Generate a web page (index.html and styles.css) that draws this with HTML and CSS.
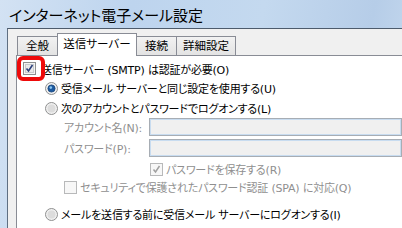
FILE: index.html
```html
<!DOCTYPE html>
<html lang="ja">
<head>
<meta charset="UTF-8">
<title>インターネット電子メール設定</title>
<link rel="stylesheet" href="styles.css">
</head>
<body>
<div class="window">
  <div class="titlebar">インターネット電子メール設定</div>
  <div class="client">
    <div class="tabs">
      <div class="tab">全般</div>
      <div class="tab active">送信サーバー</div>
      <div class="tab">接続</div>
      <div class="tab last">詳細設定</div>
    </div>
    <div class="panel">
      <div class="row row-smtp">
        <svg class="box" width="13" height="13" viewBox="0 0 13 13">
          <rect x="0.5" y="0.5" width="12" height="12" fill="#f4f4f4" stroke="#8e8f8f"/>
          <rect x="2.5" y="2.5" width="8" height="8" fill="#e9e9ea" stroke="#c9cbcd"/>
          <path d="M3.5 6.5 L5.5 9 L9.5 3" fill="none" stroke="#2b3f7a" stroke-width="1.6"/>
        </svg>
        <span class="label">送信サーバー (SMTP) は認証が必要(O)</span>
        <div class="mark"></div>
      </div>
      <div class="row row-radio">
        <svg class="radio" width="13" height="13" viewBox="0 0 13 13">
          <circle cx="6.5" cy="6.5" r="6" fill="#f0f0f0" stroke="#8e8f8f"/>
          <circle cx="6.5" cy="6.5" r="3.6" fill="#1d5aa0" stroke="#19457a" stroke-width="0.8"/>
          <circle cx="5.8" cy="5.6" r="1.3" fill="#8cc8f2"/>
        </svg>
        <span class="label">受信メール サーバーと同じ設定を使用する(U)</span>
      </div>
      <div class="row row-radio">
        <svg class="radio" width="13" height="13" viewBox="0 0 13 13">
          <circle cx="6.5" cy="6.5" r="6" fill="#f0f0f0" stroke="#8e8f8f"/>
          <circle cx="6.5" cy="6.5" r="4" fill="#dcdcdc"/>
        </svg>
        <span class="label">次のアカウントとパスワードでログオンする(L)</span>
      </div>
      <div class="field">
        <span class="field-label">アカウント名(N):</span>
        <div class="input"></div>
      </div>
      <div class="field">
        <span class="field-label">パスワード(P):</span>
        <div class="input"></div>
      </div>
      <div class="row row-save">
        <svg class="box" width="13" height="13" viewBox="0 0 13 13">
          <rect x="0.5" y="0.5" width="12" height="12" fill="#f7f7f7" stroke="#b8b9ba"/>
          <path d="M3.5 6.5 L5.5 9 L9.5 3" fill="none" stroke="#a0a0a0" stroke-width="1.5"/>
        </svg>
        <span class="label disabled">パスワードを保存する(R)</span>
      </div>
      <div class="row row-spa">
        <svg class="box" width="13" height="13" viewBox="0 0 13 13">
          <rect x="0.5" y="0.5" width="12" height="12" fill="#f7f7f7" stroke="#b8b9ba"/>
        </svg>
        <span class="label disabled">セキュリティで保護されたパスワード認証 (SPA) に対応(Q)</span>
      </div>
      <div class="row row-radio row-last">
        <svg class="radio" width="13" height="13" viewBox="0 0 13 13">
          <circle cx="6.5" cy="6.5" r="6" fill="#f0f0f0" stroke="#8e8f8f"/>
          <circle cx="6.5" cy="6.5" r="4" fill="#dcdcdc"/>
        </svg>
        <span class="label">メールを送信する前に受信メール サーバーにログオンする(I)</span>
      </div>
    </div>
  </div>
</div>
</body>
</html>
```

FILE: styles.css
```css
body {
  margin: 0;
  width: 402px;
  height: 228px;
  overflow: hidden;
  font-family: "DejaVu Sans", "Noto Sans CJK JP", sans-serif;
  font-feature-settings: "palt";
  background: linear-gradient(100deg, #d3e2f3 0%, #bdd4ee 30%, #c4d9ef 60%, #b6cde8 85%, #c8dbef 100%);
}
.window {
  display: flex;
  flex-direction: column;
  height: 228px;
}
.titlebar {
  height: 28px;
  line-height: 29px;
  padding-left: 9px;
  font-family: "Noto Sans CJK JP", sans-serif;
  font-size: 15px;
  color: #000;
}
.client {
  flex: 1;
  margin-left: 7px;
  border-top: 1px solid #4d5b6c;
  border-left: 1px solid #5f6f82;
  background: #f0f0f0;
  padding: 4px 0 0 8px;
}
.tabs {
  display: flex;
  align-items: flex-end;
  height: 22px;
  padding-left: 1px;
  position: relative;
  z-index: 1;
}
.tab {
  box-sizing: border-box;
  height: 19px;
  border: 1px solid #898c95;
  border-bottom: none;
  margin-right: -1px;
  background: linear-gradient(#f2f2f2, #e3e3e3);
  font-size: 11.5px;
  line-height: 18px;
  text-align: center;
  width: 41px;
}
.tab.active {
  height: 23px;
  margin-bottom: -1px;
  width: 80px;
  background: #fff;
  line-height: 20px;
}
.tab.last {
  width: 60px;
}
.panel {
  background: #fff;
  border-top: 1px solid #898c95;
  border-left: 1px solid #898c95;
  height: 180px;
  padding-top: 3px;
  font-size: 11px;
  letter-spacing: -0.2px;
}
.row {
  display: flex;
  align-items: center;
  height: 19px;
  white-space: nowrap;
}
.row svg {
  flex: none;
}
.row-smtp {
  position: relative;
  padding-left: 6px;
}
.row-smtp .label {
  margin-left: 5px;
}
.mark {
  position: absolute;
  left: 0;
  top: -3px;
  width: 28px;
  height: 25px;
  box-sizing: border-box;
  border: 4px solid #ee0a0a;
  border-radius: 6px;
}
.row-radio {
  height: 20px;
  padding-left: 28px;
}
.row-radio .label {
  margin-left: 3px;
}
.field {
  display: flex;
  align-items: center;
  height: 18px;
  margin-bottom: 3px;
  padding-left: 47px;
  white-space: nowrap;
}
.field-label {
  width: 85px;
  color: #8f8f8f;
}
.input {
  flex: 1;
  height: 18px;
  box-sizing: border-box;
  border: 1px solid #a7adb4;
  box-shadow: inset 0 0 0 1px #c8dcf0;
  background: #f0f0f0;
}
.row-save {
  height: 18px;
  padding-left: 133px;
}
.row-save .label, .row-spa .label {
  margin-left: 3px;
}
.row-spa {
  height: 18px;
  padding-left: 47px;
}
.row-last {
  margin-top: 8px;
}
.disabled {
  color: #8f8f8f;
}
```
